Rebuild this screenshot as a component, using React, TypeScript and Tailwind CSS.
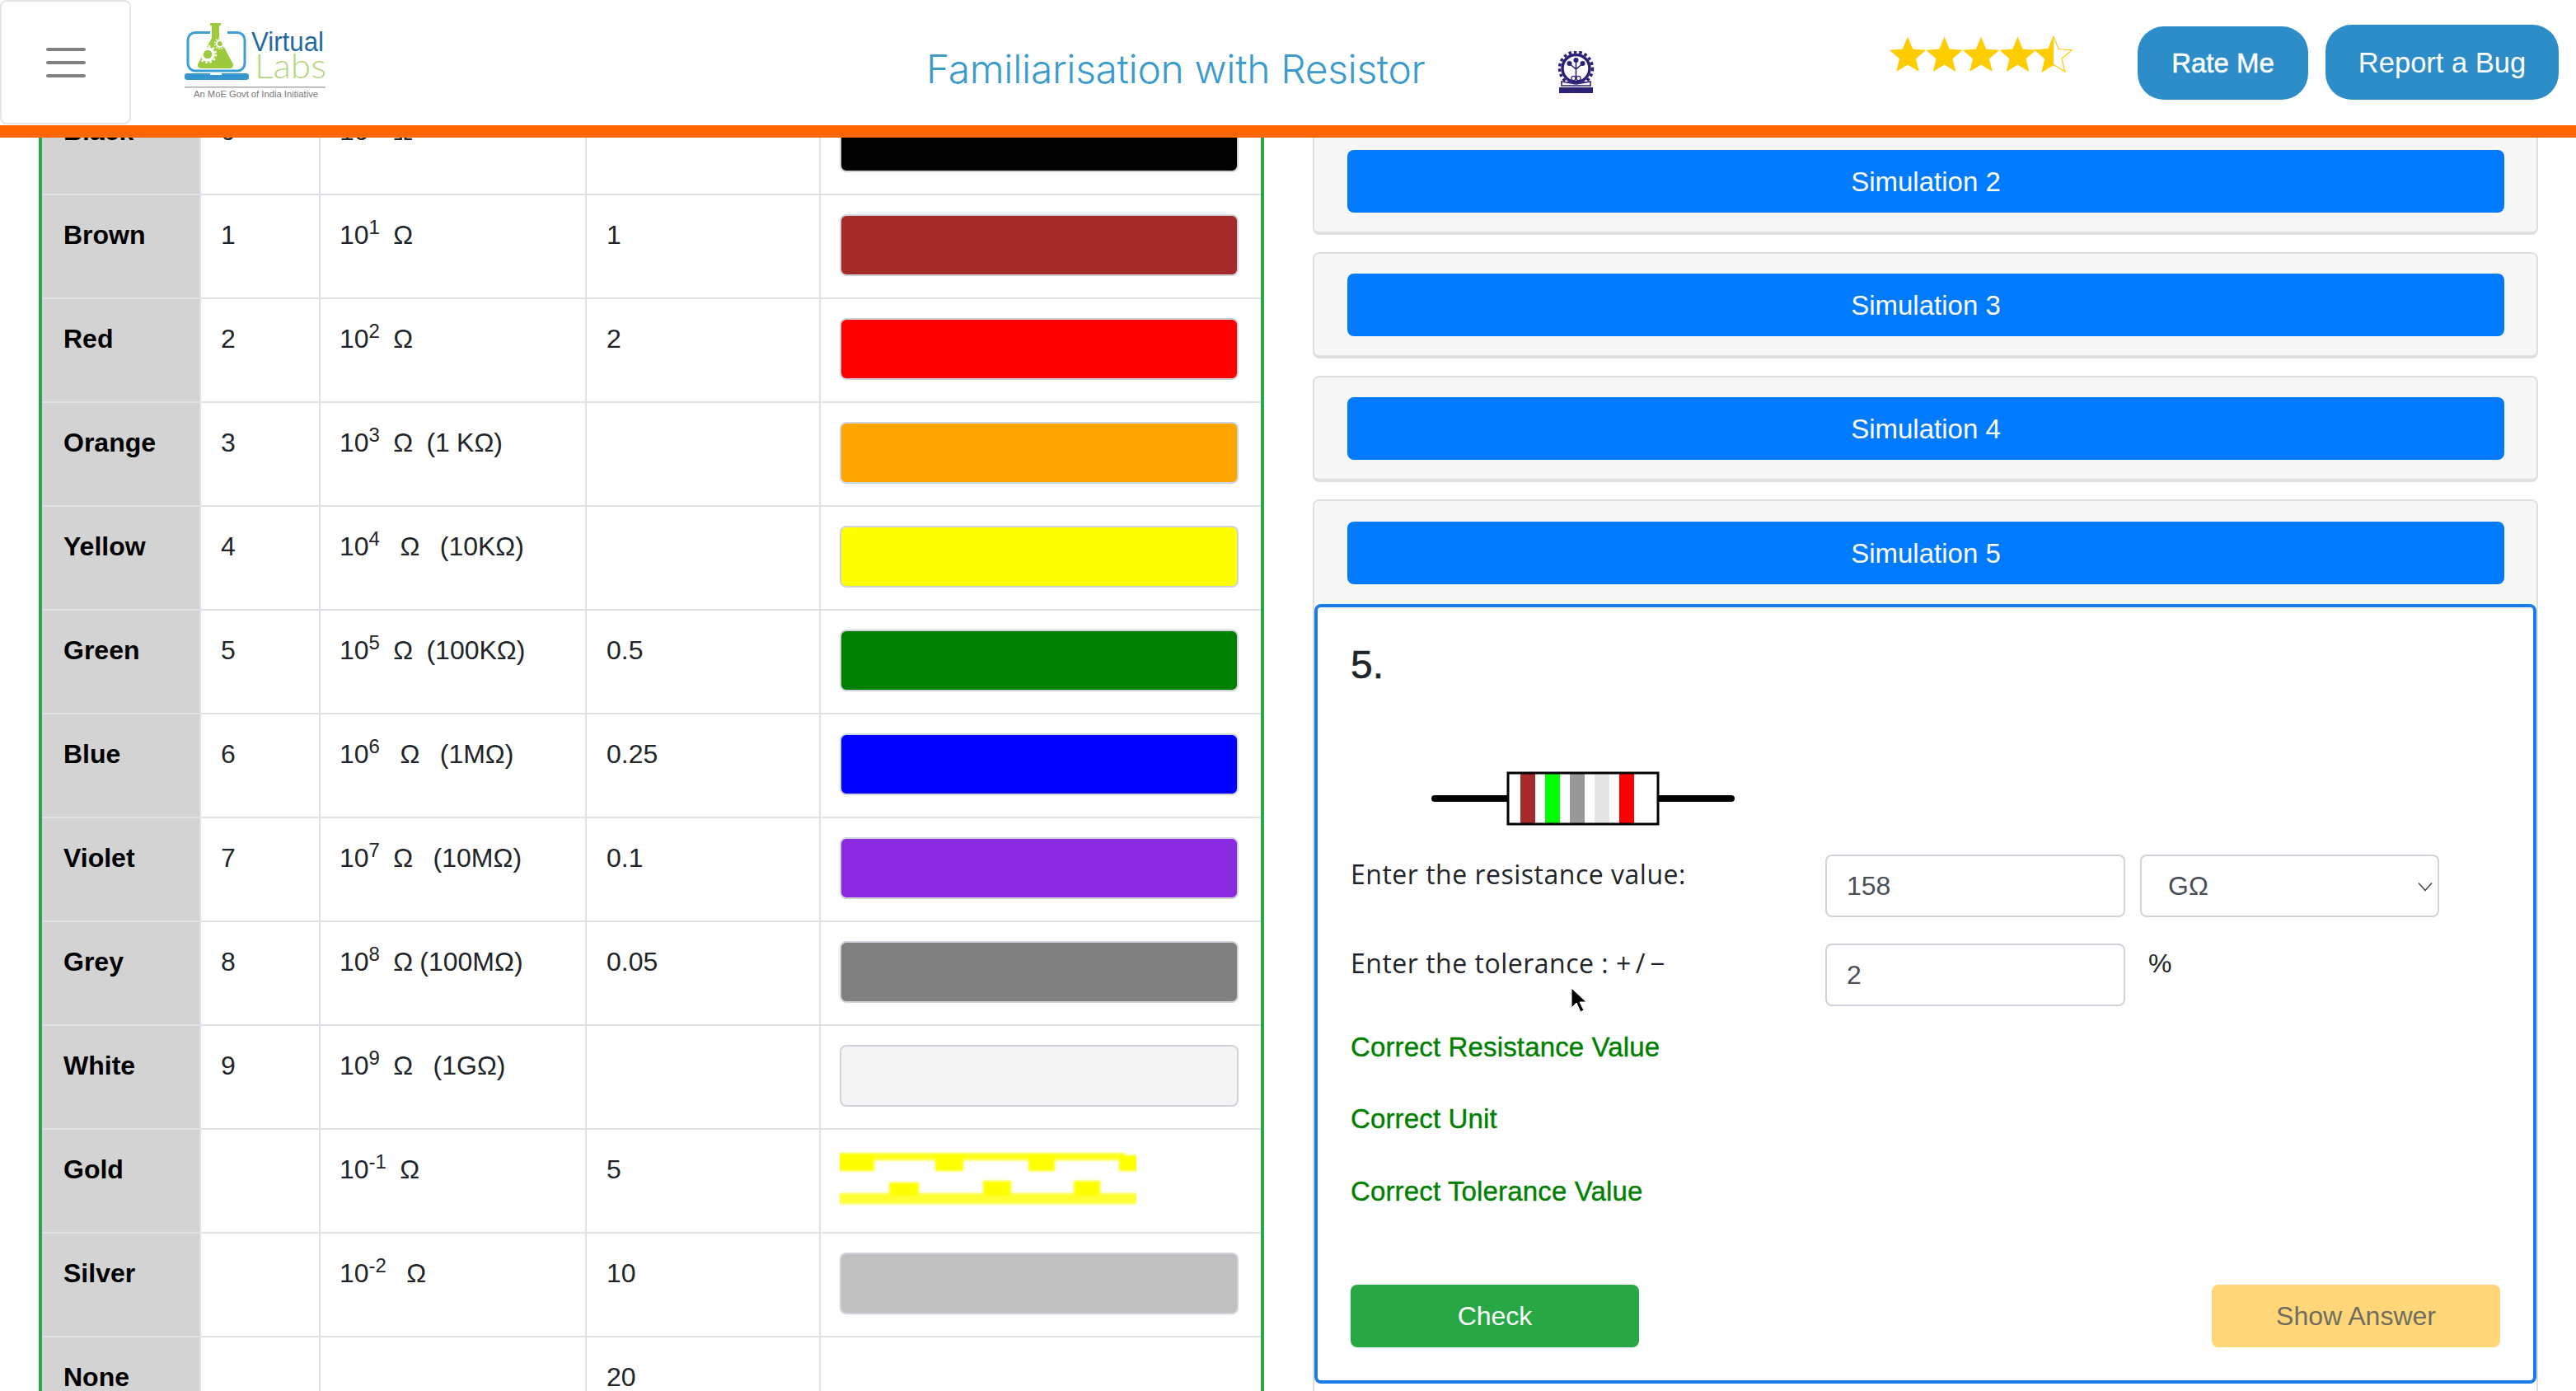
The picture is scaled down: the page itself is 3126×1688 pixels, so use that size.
import React from "react";

const SANS = "font-['Liberation_Sans',Arial,sans-serif]";

type Row = { name: string; num: string; mult: React.ReactNode; tol: string; swatch?: string; gold?: boolean };

const P = ({ e, rest }: { e: string; rest: string }) => (
  <>
    10<sup>{e}</sup>
    {rest}
  </>
);

const rows: Row[] = [
  { name: "Black", num: "0", mult: <P e="0" rest={"\u00a0\u00a0Ω"} />, tol: "", swatch: "bg-[#000000]" },
  { name: "Brown", num: "1", mult: <P e="1" rest={"\u00a0\u00a0Ω"} />, tol: "1", swatch: "bg-[#a52a2a]" },
  { name: "Red", num: "2", mult: <P e="2" rest={"\u00a0\u00a0Ω"} />, tol: "2", swatch: "bg-[#ff0000]" },
  { name: "Orange", num: "3", mult: <P e="3" rest={"\u00a0\u00a0Ω\u00a0\u00a0(1 KΩ)"} />, tol: "", swatch: "bg-[#ffa500]" },
  { name: "Yellow", num: "4", mult: <P e="4" rest={"\u00a0\u00a0\u00a0Ω\u00a0\u00a0\u00a0(10KΩ)"} />, tol: "", swatch: "bg-[#ffff00]" },
  { name: "Green", num: "5", mult: <P e="5" rest={"\u00a0\u00a0Ω\u00a0\u00a0(100KΩ)"} />, tol: "0.5", swatch: "bg-[#008000]" },
  { name: "Blue", num: "6", mult: <P e="6" rest={"\u00a0\u00a0\u00a0Ω\u00a0\u00a0\u00a0(1MΩ)"} />, tol: "0.25", swatch: "bg-[#0000ff]" },
  { name: "Violet", num: "7", mult: <P e="7" rest={"\u00a0\u00a0Ω\u00a0\u00a0\u00a0(10MΩ)"} />, tol: "0.1", swatch: "bg-[#8a2be2]" },
  { name: "Grey", num: "8", mult: <P e="8" rest={"\u00a0\u00a0Ω (100MΩ)"} />, tol: "0.05", swatch: "bg-[#808080]" },
  { name: "White", num: "9", mult: <P e="9" rest={"\u00a0\u00a0Ω\u00a0\u00a0\u00a0(1GΩ)"} />, tol: "", swatch: "bg-[#f4f4f4]" },
  { name: "Gold", num: "", mult: <P e="-1" rest={"\u00a0\u00a0Ω"} />, tol: "5", gold: true },
  { name: "Silver", num: "", mult: <P e="-2" rest={"\u00a0\u00a0\u00a0Ω"} />, tol: "10", swatch: "bg-[#c0c0c0]" },
  { name: "None", num: "", mult: "", tol: "20" },
];

function GoldBar() {
  return (
    <svg width="360" height="66" viewBox="0 0 360 66" className="block mt-[27px]">
      <defs>
        <filter id="gb" x="-5%" y="-10%" width="110%" height="120%">
          <feGaussianBlur stdDeviation="1.6" />
        </filter>
      </defs>
      <g fill="#ffff00" filter="url(#gb)">
        <rect x="-4" y="1" width="350" height="9" fill="#ffff1a" />
        <rect x="-4" y="2" width="46" height="21" />
        <rect x="116" y="2" width="34" height="21" />
        <rect x="229" y="2" width="32" height="21" />
        <rect x="339" y="4" width="25" height="19" />
        <rect x="-4" y="50" width="368" height="13" fill="#ffff33" />
        <rect x="60" y="37" width="36" height="16" />
        <rect x="174" y="35" width="34" height="18" />
        <rect x="284" y="35" width="32" height="18" />
      </g>
    </svg>
  );
}

function Logo() {
  return (
    <svg width="220" height="120" viewBox="0 0 220 120" className="block shrink-0">
      <path d="M55 29.5H37a9 9 0 0 0-9 9V67a9 9 0 0 0 9 9h51a9 9 0 0 0 9-9V38.5a9 9 0 0 0-9-9H76" fill="none" stroke="#3b9ed4" strokeWidth="3" />
      <rect x="24" y="79" width="78" height="8" rx="3" fill="#3497d0" />
      <rect x="55" y="79" width="14" height="2" fill="#ffffff" />
      <path d="M55 18h13v3h-2v15l17 32a4 4 0 0 1-4 5H44a4 4 0 0 1-4-5l17-32V21h-2z" fill="#9bcb3c" />
      <circle cx="52" cy="56" r="7" fill="none" stroke="#ffffff" strokeWidth="3.5" />
      <circle cx="52" cy="56" r="10" fill="none" stroke="#ffffff" strokeWidth="2.5" strokeDasharray="2.5 2.8" />
      <circle cx="67" cy="43" r="4" fill="none" stroke="#ffffff" strokeWidth="2" />
      <circle cx="67" cy="43" r="6.2" fill="none" stroke="#ffffff" strokeWidth="1.6" strokeDasharray="1.6 1.7" />
      <text x="105" y="52" fontFamily="'Liberation Sans',Arial,sans-serif" fontSize="33" fill="#1f6a9e" textLength="88" lengthAdjust="spacingAndGlyphs">
        Virtual
      </text>
      <text x="109" y="85" fontFamily="Lato,sans-serif" fontWeight="300" fontSize="42" fill="#b4d77d" textLength="87" lengthAdjust="spacingAndGlyphs">
        Labs
      </text>
      <rect x="24" y="95" width="171" height="1.5" fill="#aaaaaa" />
      <text x="35" y="108" fontFamily="'Liberation Sans',Arial,sans-serif" fontSize="10.5" fill="#777777" textLength="151" lengthAdjust="spacingAndGlyphs">
        An MoE Govt of India Initiative
      </text>
    </svg>
  );
}

function IitLogo() {
  const c = "#2b2277";
  return (
    <svg width="47" height="51" viewBox="0 0 47 51" className="block shrink-0">
      <circle cx="23.5" cy="21" r="20" fill="none" stroke={c} strokeWidth="3.5" strokeDasharray="3.5 3" />
      <circle cx="23.5" cy="21" r="16.5" fill="none" stroke={c} strokeWidth="3.5" />
      <path d="M23.5 34V12M23.5 22l-7-6M23.5 22l7-6" stroke={c} strokeWidth="1.6" fill="none" />
      <circle cx="23.5" cy="11" r="3" fill={c} />
      <circle cx="15.5" cy="15" r="3" fill={c} />
      <circle cx="31.5" cy="15" r="3" fill={c} />
      <path d="M6 37l17.5 3L41 37v5H6z" fill="#ffffff" stroke={c} strokeWidth="1.6" />
      <circle cx="20.5" cy="33" r="2.6" fill="none" stroke={c} strokeWidth="1.2" />
      <circle cx="26.5" cy="33" r="2.6" fill="none" stroke={c} strokeWidth="1.2" />
      <rect x="3" y="44" width="41" height="7" fill={c} />
    </svg>
  );
}

function Stars() {
  const star = (cx: number) => {
    const pts: string[] = [];
    for (let i = 0; i < 10; i++) {
      const r = i % 2 === 0 ? 23.5 : 10.5;
      const a = -Math.PI / 2 + (i * Math.PI) / 5;
      pts.push(`${(cx + r * Math.cos(a)).toFixed(1)},${(25 + r * Math.sin(a)).toFixed(1)}`);
    }
    return pts.join(" ");
  };
  return (
    <svg width="224" height="46" viewBox="0 0 224 46" className="block shrink-0">
      <defs>
        <clipPath id="half">
          <rect x="178" y="0" width="22" height="46" />
        </clipPath>
      </defs>
      {[23, 67.5, 112, 156.5].map((x) => (
        <polygon key={x} points={star(x)} fill="#ffcc00" />
      ))}
      <polygon points={star(200)} fill="#ffffff" stroke="#ffcc00" strokeWidth="1.2" />
      <polygon points={star(200)} fill="#ffcc00" clipPath="url(#half)" />
    </svg>
  );
}

function Resistor() {
  const bands: [number, string][] = [
    [15, "#a52a2a"],
    [45, "#00ff00"],
    [75, "#999999"],
    [105, "#e6e6e6"],
    [135, "#ff0000"],
  ];
  return (
    <svg width="368" height="80" viewBox="0 0 368 80" className="block ml-[98px] mt-[86px]">
      <line x1="4" y1="40" x2="94" y2="40" stroke="#000000" strokeWidth="8" strokeLinecap="round" />
      <line x1="276" y1="40" x2="364" y2="40" stroke="#000000" strokeWidth="8" strokeLinecap="round" />
      <g transform="translate(93 9)">
        <rect x="0" y="0" width="182" height="62" fill="#ffffff" />
        {bands.map(([x, col]) => (
          <rect key={x} x={x} y="0" width="18" height="62" fill={col} />
        ))}
        <rect x="0" y="0" width="182" height="62" fill="none" stroke="#000000" strokeWidth="3" />
      </g>
    </svg>
  );
}

function SimCard({ label }: { label: string }) {
  return (
    <div className="mb-[21px] rounded-lg border-x-2 border-t-2 border-b-4 border-[#dfdfdf] bg-[#f7f7f7] pl-[40px] pr-[39px] pt-[24px] pb-[23px]">
      <button className="block h-[76px] w-full rounded-lg bg-[#007bff] pt-[2px] text-center text-[33px] text-white">{label}</button>
    </div>
  );
}

export default function App() {
  return (
    <div className={`${SANS} flex h-[1688px] w-[3126px] flex-col overflow-hidden bg-white text-[32px] leading-[48px] text-[#212529]`}>
      <header className="relative z-10 flex h-[167px] shrink-0 items-start border-b-[15px] border-[#ff6600] bg-white">
        <button className="flex h-[151px] w-[159px] shrink-0 flex-col items-center justify-center gap-3 rounded-lg border-2 border-[#e6e6e6] bg-white">
          <span className="block h-1 w-[48px] rounded-full bg-[#808080]" />
          <span className="block h-1 w-[48px] rounded-full bg-[#808080]" />
          <span className="block h-1 w-[48px] rounded-full bg-[#808080]" />
        </button>
        <div className="ml-[41px] mt-[10px]">
          <Logo />
        </div>
        <h1 className="ml-[704px] mt-[56px] w-[640px] shrink-0 whitespace-nowrap font-['Inter',sans-serif] text-[48px] font-light leading-[56px] tracking-[-0.35px] text-[#3a9bcc]">
          Familiarisation with Resistor
        </h1>
        <div className="ml-[125px] mt-[62px]">
          <IitLogo />
        </div>
        <div className="ml-[356px] mt-[43px]">
          <Stars />
        </div>
        <button className="ml-[78px] mt-[32px] h-[89px] w-[207px] shrink-0 rounded-[32px] bg-[#2c8dc8] text-[33px] text-white [-webkit-text-stroke:0.5px_white]">
          Rate Me
        </button>
        <button className="ml-[21px] mt-[30px] h-[91px] w-[283px] shrink-0 rounded-[32px] bg-[#2c8dc8] text-[34.5px] text-white">
          Report a Bug
        </button>
      </header>

      <main className="flex min-h-0 flex-1 overflow-hidden">
        <div className="ml-[47px] mt-[-58px] w-[1487px] shrink-0 self-start border-x-4 border-[#28a745]">
          <table className="w-full table-fixed border-collapse">
            <colgroup>
              <col className="w-[192px]" />
              <col className="w-[145px]" />
              <col className="w-[323px]" />
              <col className="w-[284px]" />
              <col className="w-[535px]" />
            </colgroup>
            <tbody>
              {rows.map((r) => (
                <tr key={r.name} className="h-[126px]">
                  <th className="border-y-2 border-[#dee2e6] bg-[#d3d3d3] pl-[26px] pt-[24px] text-left align-top font-bold text-black">{r.name}</th>
                  <td className="border-2 border-[#dee2e6] pl-[24px] pt-[24px] align-top">{r.num}</td>
                  <td className="border-2 border-[#dee2e6] pl-[23px] pt-[24px] align-top [word-spacing:-0.75px]">{r.mult}</td>
                  <td className="border-2 border-[#dee2e6] pl-[24px] pt-[24px] align-top">{r.tol}</td>
                  <td className="border-y-2 border-[#dee2e6] pl-[23px] pr-[27px] align-top">
                    {r.swatch && <div className={`mt-[23px] h-[75px] rounded-lg border-2 border-[#ced4da] ${r.swatch}`} />}
                    {r.gold && <GoldBar />}
                  </td>
                </tr>
              ))}
            </tbody>
          </table>
        </div>

        <div className="ml-[59px] mt-[-11px] w-[1487px] shrink-0">
          <SimCard label="Simulation 2" />
          <SimCard label="Simulation 3" />
          <SimCard label="Simulation 4" />
          <div className="h-[1300px] rounded-lg border-x-2 border-t-2 border-[#dfdfdf] bg-white">
            <div className="rounded-t-lg bg-[#f7f7f7] pl-[40px] pr-[39px] pt-[25px] pb-[24px]">
              <button className="block h-[76px] w-full rounded-lg bg-[#007bff] pt-[2px] text-center text-[33px] text-white">Simulation 5</button>
            </div>
            <section className="relative h-[946px] rounded-lg border-4 border-[#1b7ce5] bg-white pl-[40px] pt-[34px]">
              <h4 className="text-[48px] leading-[72px] [-webkit-text-stroke:0.6px_#212529]">5.</h4>
              <Resistor />
              <div className="mt-[28px] flex items-start">
                <label className="w-[576px] shrink-0 font-['Open_Sans',sans-serif] text-[32px] tracking-[0.5px]">Enter the resistance value:</label>
                <input
                  defaultValue="158"
                  className="h-[76px] w-[364px] rounded-lg border-2 border-[#ced4da] bg-white pl-[24px] text-[32px] text-[#495057] outline-none"
                />
                <div className="relative ml-[18px] w-[363px]">
                  <select
                    defaultValue="GΩ"
                    className="h-[76px] w-full appearance-none rounded-lg border-2 border-[#ced4da] bg-white pl-[32px] text-[32px] text-[#495057] outline-none"
                  >
                    <option>Ω</option>
                    <option>KΩ</option>
                    <option>MΩ</option>
                    <option>GΩ</option>
                  </select>
                  <svg width="18" height="12" viewBox="0 0 18 12" className="pointer-events-none absolute right-[8px] top-[33px]">
                    <path d="M1 1.5l8 9 8-9" fill="none" stroke="#495057" strokeWidth="1.6" />
                  </svg>
                </div>
              </div>
              <div className="mt-[32px] flex items-start">
                <label className="w-[576px] shrink-0 font-['Open_Sans',sans-serif] text-[32px] tracking-[0.5px]">
                  Enter the tolerance : <span className="tracking-[5.5px]">+/−</span>
                </label>
                <input
                  defaultValue="2"
                  className="h-[76px] w-[364px] rounded-lg border-2 border-[#ced4da] bg-white pl-[24px] text-[32px] text-[#495057] outline-none"
                />
                <span className="ml-[28px]">%</span>
              </div>
              <p className="mt-[26px] text-[33px] tracking-[0.15px] text-[#008000] [-webkit-text-stroke:0.4px_#008000]">Correct Resistance Value</p>
              <p className="mt-[39px] text-[33px] tracking-[0.15px] text-[#008000] [-webkit-text-stroke:0.4px_#008000]">Correct Unit</p>
              <p className="mt-[40px] text-[33px] tracking-[0.15px] text-[#008000] [-webkit-text-stroke:0.4px_#008000]">Correct Tolerance Value</p>
              <div className="mt-[89px] flex w-[1395px] justify-between">
                <button className="h-[76px] w-[350px] rounded-lg bg-[#28a745] text-[32px] text-white">Check</button>
                <button className="h-[76px] w-[350px] rounded-lg bg-[#ffd778] text-[32px] text-[#6f6c60]">Show Answer</button>
              </div>
              <svg width="22" height="32" viewBox="0 0 22 32" className="absolute left-[306px] top-[461px]">
                <path d="M2 1v24l6-6 5 11 4-2-5-10h8z" fill="#000000" stroke="#ffffff" strokeWidth="1" />
              </svg>
            </section>
          </div>
        </div>
      </main>
    </div>
  );
}
